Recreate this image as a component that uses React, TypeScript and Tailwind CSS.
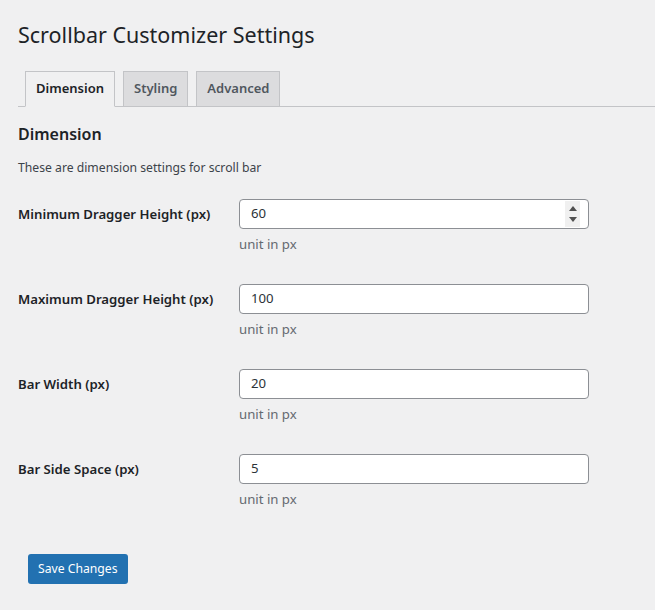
import React from "react";

const rows = [
  { label: "Minimum Dragger Height (px)", value: "60", spinner: true },
  { label: "Maximum Dragger Height (px)", value: "100" },
  { label: "Bar Width (px)", value: "20" },
  { label: "Bar Side Space (px)", value: "5" },
];

export default function App() {
  return (
    <div
      className="min-h-[610px] w-[655px] bg-[#f0f0f1] text-[#1d2327] overflow-hidden"
      style={{ fontFamily: '"Noto Sans", "Open Sans", sans-serif' }}
    >
      <div className="pl-[18px] pt-[20px]">
        <h1 className="text-[21.5px] leading-[29px] font-normal text-[#1d2327]">
          Scrollbar Customizer Settings
        </h1>

        <div className="mt-[22px] flex items-end border-b border-[#c3c4c7] pl-[7px] gap-[8px] h-[36px]">
          <div className="h-[36px] -mb-px px-[10px] flex items-center border border-[#c3c4c7] border-b-[#f0f0f1] bg-[#f0f0f1] text-[13px] font-semibold text-[#1d2327]">
            Dimension
          </div>
          <div className="h-[35px] px-[10px] flex items-center border border-[#c3c4c7] border-b-0 bg-[#dcdcde] text-[13px] font-semibold text-[#50575e]">
            Styling
          </div>
          <div className="h-[35px] px-[10px] flex items-center border border-[#c3c4c7] border-b-0 bg-[#dcdcde] text-[13px] font-semibold text-[#50575e]">
            Advanced
          </div>
        </div>

        <h2 className="mt-[16px] text-[16px] leading-[22px] font-semibold text-[#1d2327]">
          Dimension
        </h2>
        <p className="mt-[14px] text-[12.2px] leading-[18px] text-[#3c434a]">
          These are dimension settings for scroll bar
        </p>

        <div className="mt-[22px] flex flex-col gap-[30px]">
          {rows.map((r) => (
            <div key={r.label} className="flex">
              <div className="w-[221px] pt-[5px] text-[13.2px] leading-[20px] font-semibold text-[#1d2327]">
                {r.label}
              </div>
              <div className="flex flex-col">
                <div className="relative w-[350px] h-[30px] bg-white border border-[#8c8f94] rounded-[4px] flex items-center pl-[11px] text-[13.2px] text-[#2c3338]">
                  {r.value}
                  {r.spinner && (
                    <div className="absolute right-[8px] top-[1px] bottom-[1px] w-[15px] bg-[#f0f0f0] flex flex-col items-center justify-center gap-[6px]">
                      <svg width="8" height="5" viewBox="0 0 8 5">
                        <path d="M4 0 L8 5 L0 5 Z" fill="#505050" />
                      </svg>
                      <svg width="8" height="5" viewBox="0 0 8 5">
                        <path d="M0 0 L8 0 L4 5 Z" fill="#505050" />
                      </svg>
                    </div>
                  )}
                </div>
                <div className="mt-[5px] text-[13.2px] leading-[20px] text-[#646970]">
                  unit in px
                </div>
              </div>
            </div>
          ))}
        </div>

        <button className="mt-[45px] ml-[10px] h-[30px] px-[10px] rounded-[3px] bg-[#2271b1] text-white text-[12.2px] leading-[28px]">
          Save Changes
        </button>
      </div>
    </div>
  );
}
